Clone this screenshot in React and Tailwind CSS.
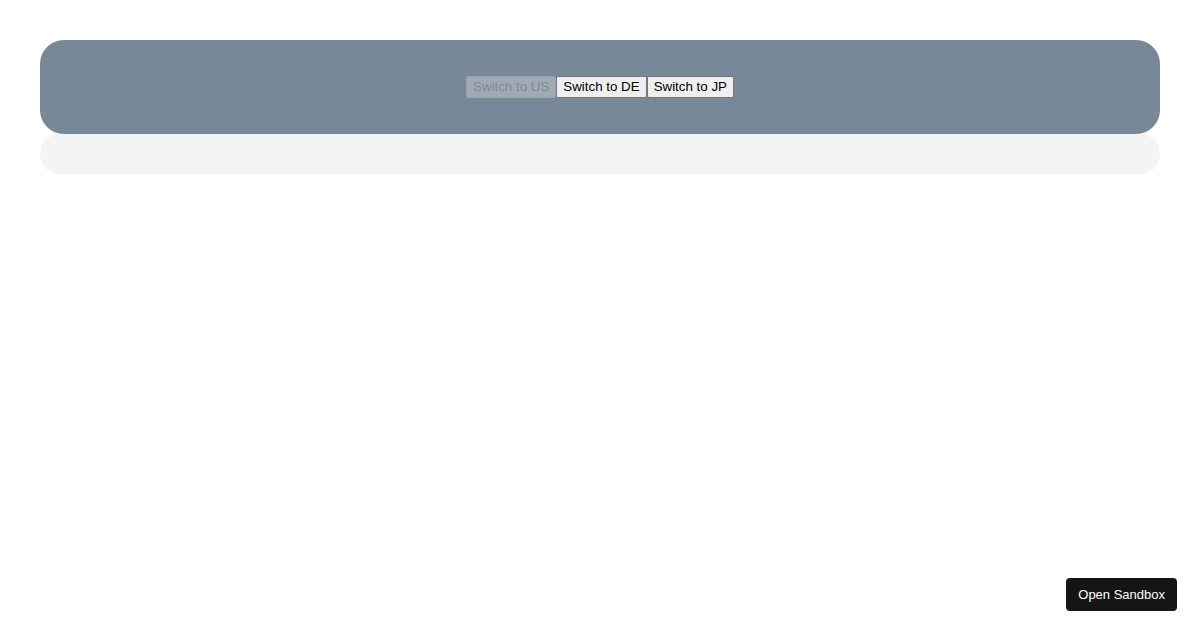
import React, { useState } from "react";

const regions = ["US", "DE", "JP"];

const App = () => {
  const [region, setRegion] = useState("US");

  return (
    <div className="min-h-[630px] bg-white p-10 font-['Liberation_Sans',Arial,sans-serif]">
      {/* cabecera */}
      <div className="flex h-[94px] items-center justify-center rounded-[24px] bg-[#778899] pb-[1px]">
        {regions.map((r) => (
          <button
            key={r}
            disabled={region === r}
            onClick={() => setRegion(r)}
            className={
              region === r
                ? "h-[22px] rounded-[2px] border border-[#9aa4ae] bg-[#a0aab4] px-[6px] text-[13.33px] leading-none text-[#7f8a95]"
                : "h-[22px] rounded-[2px] border border-[#767676] bg-[#efefef] px-[6px] text-[13.33px] leading-none text-black"
            }
          >
            Switch to {r}
          </button>
        ))}
      </div>

      {/* contenido */}
      <div className="h-10 rounded-[20px] bg-[#f4f4f4]"></div>

      <button className="fixed bottom-[19px] right-[23px] h-[33px] rounded-[4px] bg-[#151515] px-[12px] text-[13px] text-white">
        Open Sandbox
      </button>
    </div>
  );
};

export default App;
